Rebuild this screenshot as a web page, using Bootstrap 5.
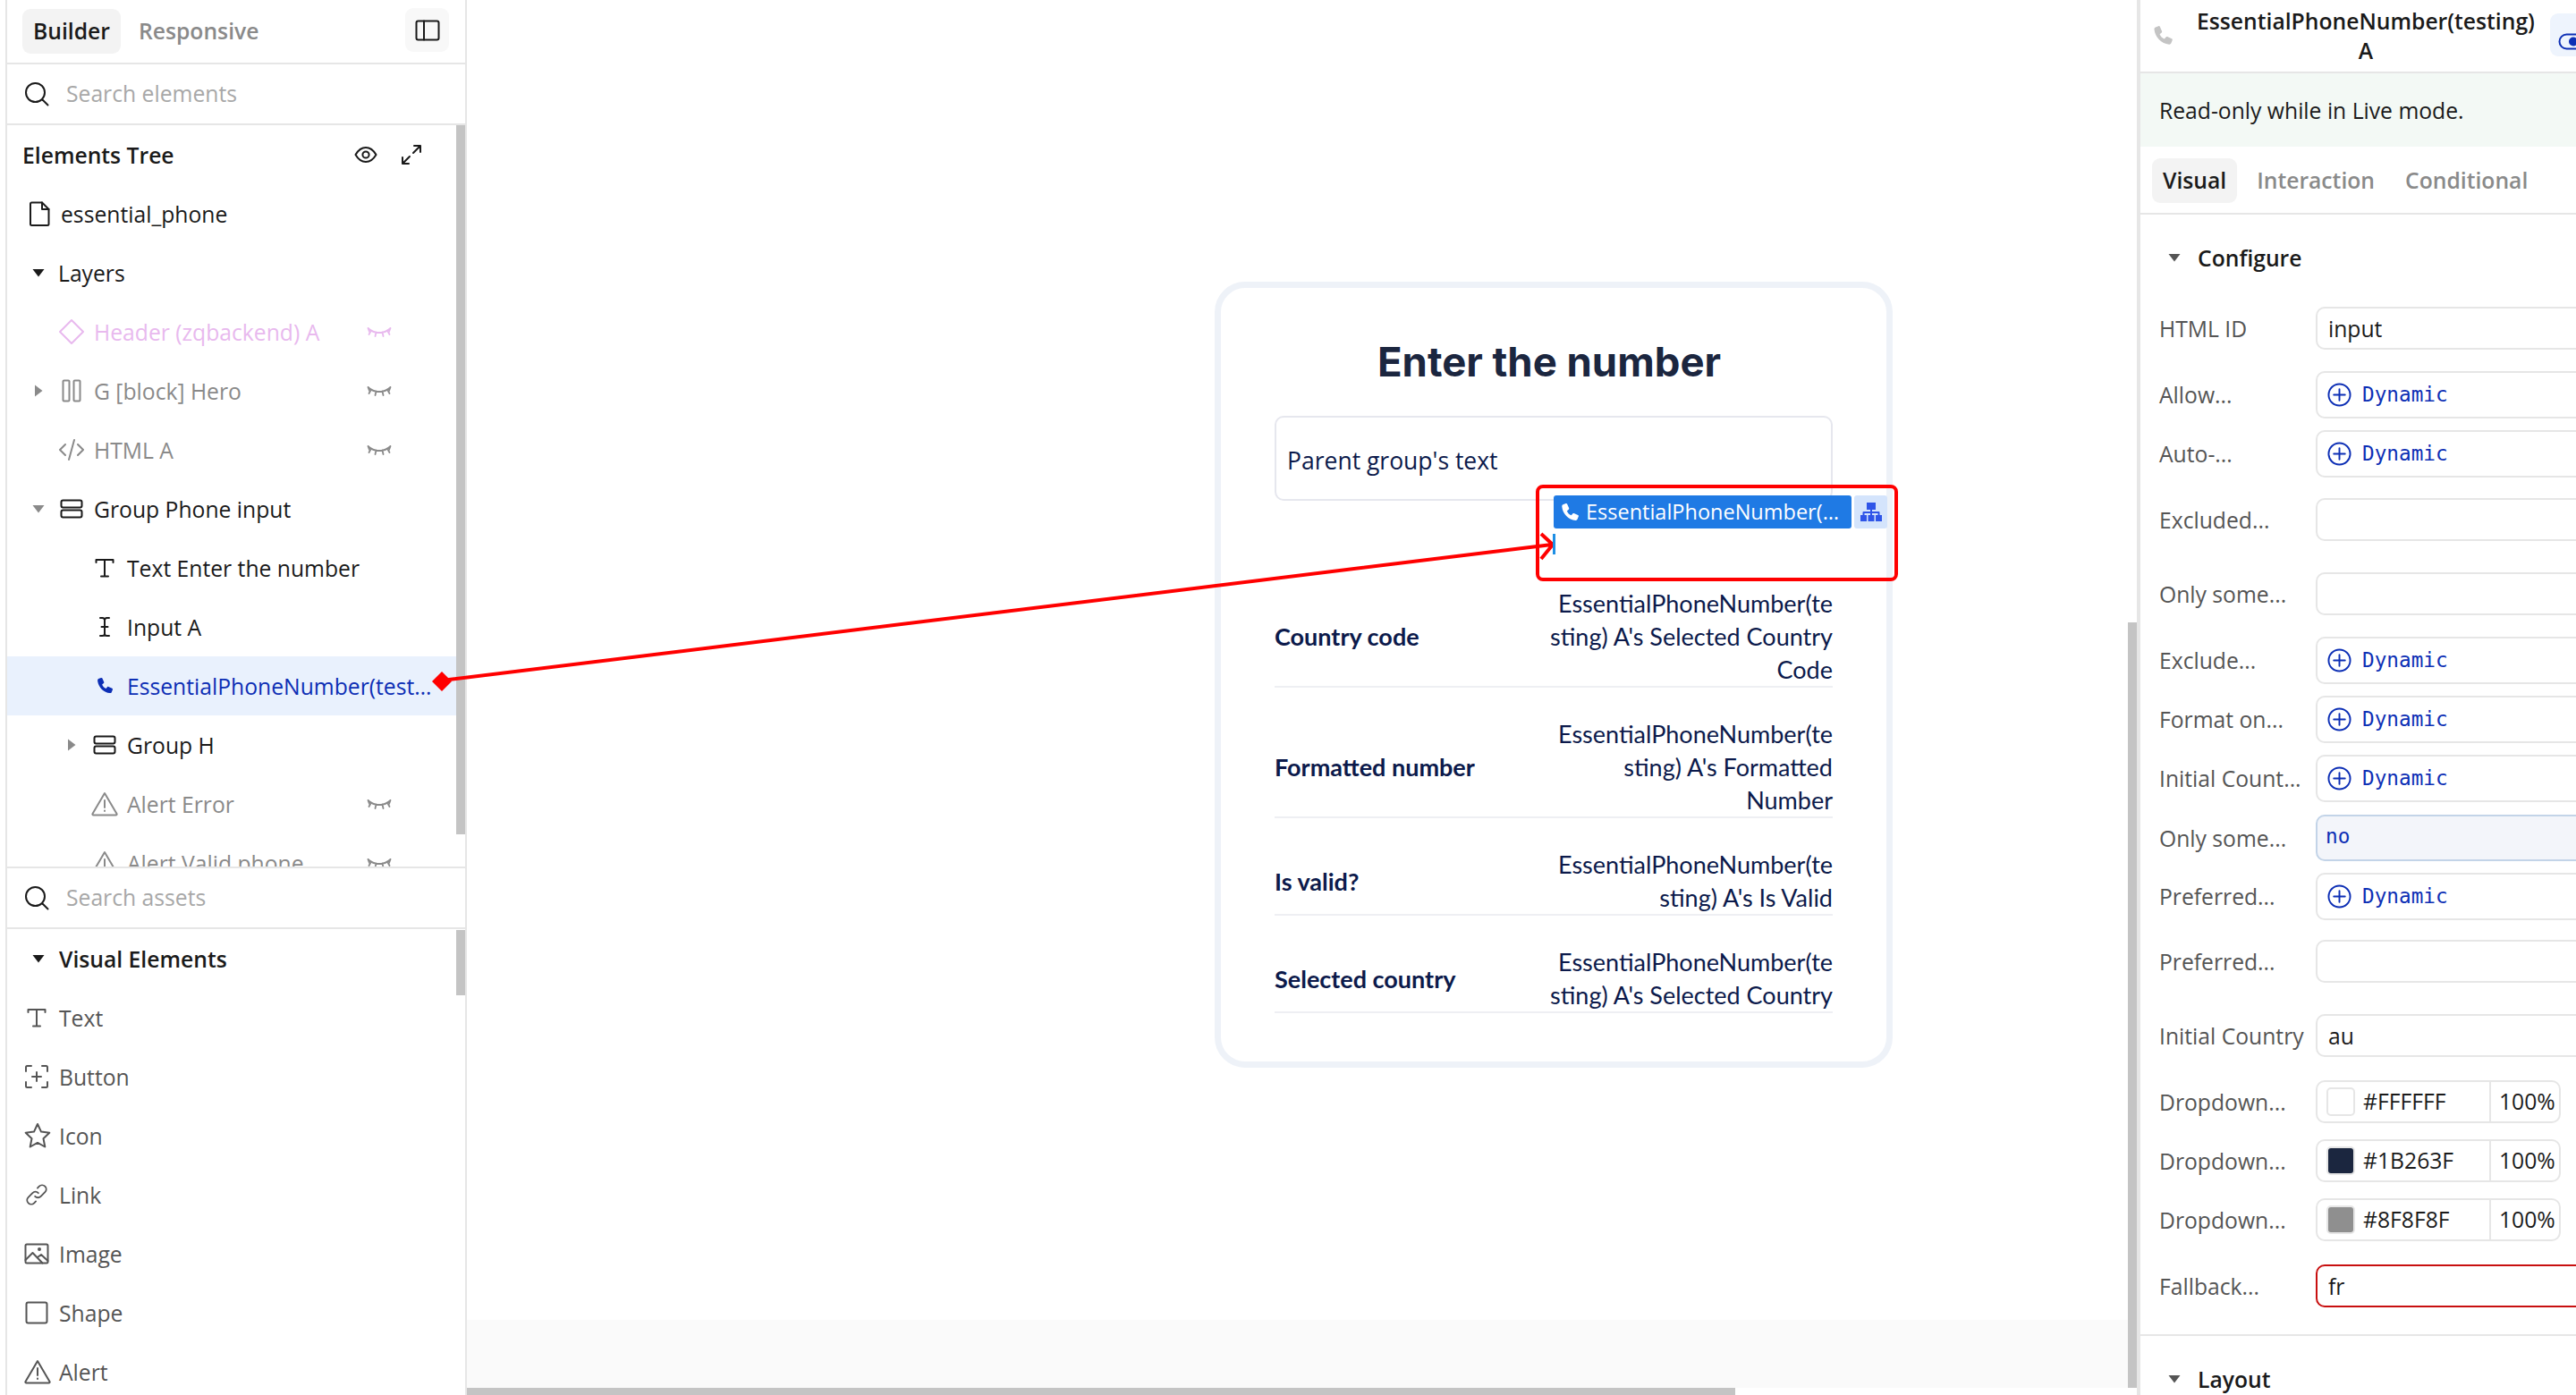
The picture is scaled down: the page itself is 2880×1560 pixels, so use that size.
<!DOCTYPE html>
<html lang="en">
<head>
  <meta charset="UTF-8">
  <meta name="viewport" content="width=device-width, initial-scale=1">
  <title>Builder - essential_phone</title>
  <link href="https://cdn.jsdelivr.net/npm/bootstrap@5.3.5/dist/css/bootstrap.min.css" rel="stylesheet">
  <style>
    body { height: 1560px; overflow: hidden; background: #fff; color: #1a1a1a; font-family: "Open Sans", sans-serif; font-size: 24.7px; line-height: 33px; }
    svg { display: block; flex-shrink: 0; }
    .ico { fill: none; stroke: currentColor; stroke-width: 2; stroke-linecap: round; stroke-linejoin: round; }
    .ico-solid { fill: currentColor; stroke: none; }
    .ico-fino { stroke-width: 1.8; }

    /* left panel */
    .panel-izq { width: 516px; margin-left: 6px; border-left: 2px solid #e6e6e6; border-right: 2px solid #e6e6e6; }
    .barra-tabs { height: 72px; padding: 10px 18px 0 17px; border-bottom: 2px solid #e6e6e6; }
    .nav-link.tab-item { height: 50px; padding: 0 12px; border-radius: 9px; font-weight: 600; line-height: 50px; color: #8a8a8a; background: none; }
    .nav-link.tab-item.active { color: #1a1a1a; background: #f3f3f3; }
    .btn-toggle-panel { width: 49px; height: 49px; margin-top: -1px; padding: 0; background: #f8f8f8; border: 0; border-radius: 9px; color: #1a1a1a; }
    .fila-buscar { height: 68px; padding-left: 19px; border-bottom: 2px solid #e6e6e6; gap: 19px; }
    .fila-buscar input { padding: 0; border: 0; border-radius: 0; font-size: 24.7px; box-shadow: none; }
    .fila-buscar input::placeholder { color: #a8a8a8; }
    .zona-arbol { height: 831px; border-bottom: 2px solid #e6e6e6; overflow: hidden; }
    .zona-assets { height: 520px; overflow: hidden; }
    .fila { height: 66px; margin-right: 10px; }
    .titulo-fila { font-weight: 600; }
    .tit-arbol { padding-left: 17px; }
    .tit-assets { padding-left: 24px; }
    .ico-pagina { margin-right: 12px; }
    .nivel-1 { padding-left: 23px; }
    .nivel-2 { padding-left: 60px; }
    .hueco-caret { width: 24px; margin-right: 10px; color: #8a8a8a; }
    .hueco-caret.negro { color: #1a1a1a; }
    .hueco-caret svg { margin: 0 auto; }
    .hueco-ico { width: 30px; margin-right: 10px; }
    .hueco-ico svg { margin: 0 auto; }
    .oculto { color: #8a8a8a; }
    .oculto-rosa { color: #e8b9ee; }
    .ojo { margin-left: auto; margin-right: 72px; }
    .fila-sel { background: #e9f1fd; color: #0d2fb5; }
    .fila-sel .nombre { max-width: 344px; }
    .activo { padding-left: 19px; color: #555; }
    .activo .hueco-ico { width: 28px; margin-right: 11px; }
    .ico-arbol { margin-left: auto; margin-right: 38px; gap: 26px; }
    .thumb-v { position: absolute; width: 10px; background: #c4c4c4; }
    .thumb-arbol { left: 510px; top: 140px; height: 793px; }
    .thumb-assets { left: 510px; top: 1040px; height: 73px; }

    /* canvas */
    .lienzo { flex: 1 1 0; min-width: 0; }
    .pagina { height: 1476px; padding: 315px 0 0 836px; background: #fff; }
    .banda { height: 76px; margin-right: 10px; background: #fafafa; }
    .tarjeta-form { width: 758px; height: 879px; padding: 0 60px; border: 7px solid #eef2f8; border-radius: 34px; color: #0c1a4b; font-family: Lato, sans-serif; font-size: 27px; line-height: 37px; }
    .titulo-form { margin: 55px 10px 32px 0; color: #1b263f; font-family: Inter, sans-serif; font-size: 45.5px; font-weight: 700; line-height: 56px; text-align: center; }
    .caja-grupo { height: 95px; padding: 30px 12px 0; border: 2px solid #e6e7ee; border-radius: 10px; font-family: "Open Sans", sans-serif; font-size: 26.5px; line-height: 36px; }
    .fila-dato { margin-top: 33px; border-bottom: 2px solid #eeeff3; }
    .fila-dato b { font-weight: 700; }
    .valor-dato { text-align: right; white-space: nowrap; }
    .primera { margin-top: 96px; }
    .scroll-h { position: absolute; left: 522px; top: 1552px; width: 1418px; height: 8px; background: #c4c4c4; }
    .scroll-v { position: absolute; left: 2379px; top: 696px; width: 10px; height: 856px; background: #c4c4c4; }

    /* right panel */
    .panel-der { width: 491px; flex-shrink: 0; border-left: 4px solid #e6e6e6; overflow: hidden; }
    .cabecera { width: 700px; height: 82px; border-bottom: 2px solid #e6e6e6; padding-left: 13px; }
    .cabecera svg.tel { color: #c4c4c4; }
    .titulo-der { width: 396px; margin-left: 17px; font-weight: 600; text-align: center; }
    .btn-modo { width: 80px; height: 48px; margin: -2px 0 0 8px; padding: 15px 0 0 9px; background: #eef4fd; border: 0; border-radius: 9px; color: #0d2fb5; }
    .aviso-live { height: 82px; padding-left: 21px; background: #f3f9f5; }
    .barra-tabs-der { height: 76px; width: 700px; padding: 13px 0 0 13px; border-bottom: 2px solid #e6e6e6; }
    .barra-tabs-der .nav-link.tab-item { margin-right: 10px; }
    .seccion { height: 96px; padding-left: 31px; gap: 19px; font-weight: 600; color: #1a1a1a; }
    .seccion .hueco-caret { width: 14px; margin: 0; color: #555; }
    .campo { width: 700px; padding-left: 21px; }
    .etiqueta { width: 175px; color: #555; white-space: nowrap; }
    .caja { width: 440px; height: 48px; padding: 0 12px; border: 2px solid #e6e6e6; border-radius: 10px; color: #1a1a1a; font-size: 24.7px; line-height: 44px; box-shadow: none; }
    .caja-din { height: 53px; padding: 0 0 0 11px; gap: 12px; color: #0d2fb5; font-family: "DejaVu Sans Mono", monospace; font-size: 22.7px; line-height: 49px; }
    .caja-no { height: 52px; background: #f3f5fa; border-color: #c3d4e8; color: #0d2fb5; font-family: "DejaVu Sans Mono", monospace; font-size: 22.7px; padding-left: 9px; }
    .caja-error { border-color: #c81010; }
    .caja-color { width: 274px; height: 48px; padding: 0; }
    .muestra { width: 32px; height: 32px; margin: 6px 0 0 10px; border: 2px solid #e6e6e6; border-radius: 5px; }
    .m-blanco { background: #fff; }
    .m-navy { background: #1b263f; }
    .m-gris { background: #8f8f8f; }
    .hex { width: 150px; padding-left: 9px; }
    .pct { width: 70px; padding-left: 9px; border-left: 2px solid #e6e6e6; }
    .bajo-7 { margin-bottom: 7px; }
    .sep-13 { margin-bottom: 13px; }
    .sep-14 { margin-bottom: 14px; }
    .sep-18 { margin-bottom: 18px; }
    .sep-22 { margin-bottom: 22px; }
    .sep-23 { margin-bottom: 23px; }
    .sep-24 { margin-bottom: 24px; }
    .sep-26 { margin-bottom: 26px; }
    .sep-30 { margin-bottom: 30px; }
    .sep-35 { margin-bottom: 35px; }
    .linea-layout { width: 700px; border-top: 2px solid #e6e6e6; }

    /* selected element overlay */
    .capa-flechas { position: absolute; left: 0; top: 0; pointer-events: none; }
    .etiqueta-sel { position: absolute; left: 1737px; top: 554px; width: 333px; height: 37px; padding: 0 7px; gap: 7px; background: #1f7ae4; border-radius: 3px; color: #fff; font-size: 23.5px; line-height: 37px; }
    .btn-jerarquia { position: absolute; left: 2073px; top: 554px; width: 37px; height: 37px; padding: 0; background: #d4e4fc; border: 0; border-radius: 3px; color: #2f55e8; }
    .cursor-sel { position: absolute; left: 1736px; top: 597px; width: 3px; height: 23px; background: #1f8fe4; }
  </style>
</head>
<body class="d-flex position-relative">

  <svg width="0" height="0" class="position-absolute">
    <defs>
      <symbol id="i-lupa" viewBox="0 0 28 28"><circle cx="12.5" cy="12.5" r="10.5"/><path d="M20.5 20.5l6 6"/></symbol>
      <symbol id="i-lateral" viewBox="0 0 28 24"><rect x="1.5" y="1.5" width="25" height="21" rx="2"/><path d="M10 1.5v21"/></symbol>
      <symbol id="i-ojo" viewBox="0 0 26 20"><path d="M1.5 10C5 4 9 2 13 2s8 2 11.5 8C21 16 17 18 13 18S5 16 1.5 10z"/><circle cx="13" cy="10" r="3.6"/></symbol>
      <symbol id="i-expandir" viewBox="0 0 24 24"><path d="M14 10l8-8M15 2h7v7M10 14l-8 8M2 15v7h7"/></symbol>
      <symbol id="i-archivo" viewBox="0 0 24 28"><path d="M2 3c0-1 .6-1.5 1.5-1.5H15L22.5 9v16.5c0 1-.6 1.5-1.5 1.5H3.5C2.600 27 2 26.5 2 25.5z"/><path d="M15 1.5V9h7.5"/></symbol>
      <symbol id="i-abajo" viewBox="0 0 14 10"><path d="M.5 1h13L7 9.5z"/></symbol>
      <symbol id="i-derecha" viewBox="0 0 10 14"><path d="M1 .5v13L9.5 7z"/></symbol>
      <symbol id="i-rombo" viewBox="0 0 30 30"><path d="M15 2l13 13-13 13L2 15z"/></symbol>
      <symbol id="i-columnas" viewBox="0 0 22 26"><rect x="1.5" y="1.5" width="7" height="23" rx="1"/><rect x="13.5" y="1.5" width="7" height="23" rx="1"/></symbol>
      <symbol id="i-codigo" viewBox="0 0 30 26"><path d="M8 7l-6 6 6 6M22 7l6 6-6 6M18 2l-6 22"/></symbol>
      <symbol id="i-cerrado" viewBox="0 0 28 14"><path d="M1.5 3c3 3 7 5 12.500 5s9.500-2 12.500-5M1.5 3l1.5 4M26.5 3L25 7M5 5.5L2.5 10M23 5.5l2.500 4.5M10.5 7.5l-1 4.5M17.5 7.5l1 4.5"/></symbol>
      <symbol id="i-grupo" viewBox="0 0 26 22"><rect x="1.5" y="1.5" width="23" height="8" rx="2"/><rect x="1.5" y="12.5" width="23" height="8" rx="2"/></symbol>
      <symbol id="i-texto" viewBox="0 0 22 22"><path d="M1.5 5V2h19v3M11 2v18M7 20.5h8"/></symbol>
      <symbol id="i-cursor" viewBox="0 0 16 24"><path d="M3 2h2.500C7 2 8 3 8 4.5v15C8 21 7 22 5.5 22H3M13 2h-2.500C9 2 8 3 8 4.5M13 22h-2.500C9 22 8 21 8 19.500M4.500 12h7"/></symbol>
      <symbol id="i-tel" viewBox="0 0 24 24"><path class="ico-solid" d="M3.800 2.500l3.400-1.300c.8-.3 1.400 0 1.700.7l2.200 5c.2.600.1 1.100-.4 1.500L8.600 10.300c1 2.500 2.700 4.200 5.200 5.300l1.800-2.100c.4-.5 1-.6 1.500-.4l4.900 2.200c.7.300 1 1 .7 1.700l-1.300 3.300c-.4 1-1.300 1.500-2.300 1.400C10.500 21 3.300 13.600 2.500 4.800c-.1-1 .4-1.900 1.300-2.300z"/></symbol>
      <symbol id="i-alerta" viewBox="0 0 30 28"><path d="M15 2L28.500 25c.4.800 0 1.5-1 1.5h-25c-1 0-1.400-.7-1-1.5z"/><path d="M15 10v8M15 21.5v.5"/></symbol>
      <symbol id="i-boton" viewBox="0 0 28 28"><path d="M2 8V3.500C2 2.500 2.500 2 3.500 2H8M20 2h4.500c1 0 1.500.5 1.500 1.500V8M26 20v4.500c0 1-.5 1.500-1.500 1.500H20M8 26H3.500C2.500 26 2 25.500 2 24.500V20M14 9v10M9 14h10"/></symbol>
      <symbol id="i-estrella" viewBox="0 0 30 30"><path d="M15 2l4 8.600 9.300 1.200-6.800 6.400 1.800 9.300L15 22.900l-8.300 4.600 1.800-9.300-6.800-6.400L11 10.600z"/></symbol>
      <symbol id="i-enlace" viewBox="0 0 28 28"><path d="M12 16c2 2 5 2 7 0l5-5c2-2 2-5 0-7s-5-2-7 0l-2 2"/><path d="M16 12c-2-2-5-2-7 0l-5 5c-2 2-2 5 0 7s5 2 7 0l2-2"/></symbol>
      <symbol id="i-imagen" viewBox="0 0 28 24"><rect x="1.5" y="1.5" width="25" height="21" rx="1.5"/><path d="M1.5 19l8-8 11 11.500M15 16l4-3 7.500 7"/><circle cx="17" cy="7" r="1"/></symbol>
      <symbol id="i-forma" viewBox="0 0 26 26"><rect x="1.5" y="1.5" width="23" height="23" rx="2"/></symbol>
      <symbol id="i-mas" viewBox="0 0 28 28"><circle cx="14" cy="14" r="12.5"/><path d="M14 7.500v13M7.500 14h13"/></symbol>
      <symbol id="i-jerarquia" viewBox="0 0 24 22"><rect x="7" y="0" width="10" height="8"/><rect x="0" y="14" width="7" height="7"/><rect x="8.5" y="14" width="7" height="7"/><rect x="17" y="14" width="7" height="7"/><path class="ico" stroke-width="1.5" d="M3.500 14v-3h17v3M12 8v6"/></symbol>
    </defs>
  </svg>

  <!-- left panel -->
  <aside class="panel-izq flex-shrink-0">
    <div class="barra-tabs d-flex justify-content-between">
      <ul class="nav gap-2">
        <li class="nav-item"><a class="nav-link tab-item active" href="#">Builder</a></li>
        <li class="nav-item"><a class="nav-link tab-item" href="#">Responsive</a></li>
      </ul>
      <button class="btn-toggle-panel d-flex align-items-center justify-content-center">
        <svg class="ico" width="28" height="24"><use href="#i-lateral"/></svg>
      </button>
    </div>
    <div class="fila-buscar d-flex align-items-center">
      <svg class="ico" width="28" height="28"><use href="#i-lupa"/></svg>
      <input type="text" class="form-control" placeholder="Search elements">
    </div>

    <div class="zona-arbol">
      <div class="fila tit-arbol d-flex align-items-center titulo-fila">
        Elements Tree
        <div class="ico-arbol d-flex align-items-center">
          <svg class="ico" width="26" height="20"><use href="#i-ojo"/></svg>
          <svg class="ico" width="24" height="24"><use href="#i-expandir"/></svg>
        </div>
      </div>
      <div class="fila tit-assets d-flex align-items-center">
        <svg class="ico ico-pagina" width="24" height="28"><use href="#i-archivo"/></svg>
        essential_phone
      </div>
      <div class="fila nivel-1 d-flex align-items-center">
        <div class="hueco-caret negro"><svg class="ico-solid" width="14" height="10"><use href="#i-abajo"/></svg></div>
        Layers
      </div>
      <div class="fila nivel-1 d-flex align-items-center oculto-rosa">
        <div class="hueco-caret"></div>
        <div class="hueco-ico"><svg class="ico" width="30" height="30"><use href="#i-rombo"/></svg></div>
        Header (zqbackend) A
        <svg class="ico ico-fino ojo" width="28" height="14"><use href="#i-cerrado"/></svg>
      </div>
      <div class="fila nivel-1 d-flex align-items-center oculto">
        <div class="hueco-caret"><svg class="ico-solid" width="10" height="14"><use href="#i-derecha"/></svg></div>
        <div class="hueco-ico"><svg class="ico" width="22" height="26"><use href="#i-columnas"/></svg></div>
        G [block] Hero
        <svg class="ico ico-fino ojo" width="28" height="14"><use href="#i-cerrado"/></svg>
      </div>
      <div class="fila nivel-1 d-flex align-items-center oculto">
        <div class="hueco-caret"></div>
        <div class="hueco-ico"><svg class="ico" width="30" height="26"><use href="#i-codigo"/></svg></div>
        HTML A
        <svg class="ico ico-fino ojo" width="28" height="14"><use href="#i-cerrado"/></svg>
      </div>
      <div class="fila nivel-1 d-flex align-items-center">
        <div class="hueco-caret"><svg class="ico-solid oculto" width="14" height="10"><use href="#i-abajo"/></svg></div>
        <div class="hueco-ico"><svg class="ico" width="26" height="22"><use href="#i-grupo"/></svg></div>
        Group Phone input
      </div>
      <div class="fila nivel-2 d-flex align-items-center">
        <div class="hueco-caret"></div>
        <div class="hueco-ico"><svg class="ico" width="22" height="22"><use href="#i-texto"/></svg></div>
        Text Enter the number
      </div>
      <div class="fila nivel-2 d-flex align-items-center">
        <div class="hueco-caret"></div>
        <div class="hueco-ico"><svg class="ico" width="16" height="24"><use href="#i-cursor"/></svg></div>
        Input A
      </div>
      <div class="fila fila-sel nivel-2 d-flex align-items-center">
        <div class="hueco-caret"></div>
        <div class="hueco-ico"><svg width="20" height="20"><use href="#i-tel"/></svg></div>
        <span class="nombre text-truncate">EssentialPhoneNumber(testing) A</span>
      </div>
      <div class="fila nivel-2 d-flex align-items-center">
        <div class="hueco-caret"><svg class="ico-solid oculto" width="10" height="14"><use href="#i-derecha"/></svg></div>
        <div class="hueco-ico"><svg class="ico" width="26" height="22"><use href="#i-grupo"/></svg></div>
        Group H
      </div>
      <div class="fila nivel-2 d-flex align-items-center oculto">
        <div class="hueco-caret"></div>
        <div class="hueco-ico"><svg class="ico" width="30" height="28"><use href="#i-alerta"/></svg></div>
        Alert Error
        <svg class="ico ico-fino ojo" width="28" height="14"><use href="#i-cerrado"/></svg>
      </div>
      <div class="fila nivel-2 d-flex align-items-center oculto">
        <div class="hueco-caret"></div>
        <div class="hueco-ico"><svg class="ico" width="30" height="28"><use href="#i-alerta"/></svg></div>
        Alert Valid phone
        <svg class="ico ico-fino ojo" width="28" height="14"><use href="#i-cerrado"/></svg>
      </div>
    </div>

    <div class="fila-buscar d-flex align-items-center">
      <svg class="ico" width="28" height="28"><use href="#i-lupa"/></svg>
      <input type="text" class="form-control" placeholder="Search assets">
    </div>

    <div class="zona-assets">
      <div class="fila tit-assets d-flex align-items-center titulo-fila">
        <div class="me-3 ps-1"><svg class="ico-solid" width="14" height="10"><use href="#i-abajo"/></svg></div>
        Visual Elements
      </div>
      <div class="fila activo d-flex align-items-center"><div class="hueco-ico"><svg class="ico mx-auto" width="22" height="22"><use href="#i-texto"/></svg></div>Text</div>
      <div class="fila activo d-flex align-items-center"><div class="hueco-ico"><svg class="ico" width="28" height="28"><use href="#i-boton"/></svg></div>Button</div>
      <div class="fila activo d-flex align-items-center"><div class="hueco-ico"><svg class="ico" width="30" height="30"><use href="#i-estrella"/></svg></div>Icon</div>
      <div class="fila activo d-flex align-items-center"><div class="hueco-ico"><svg class="ico" width="26" height="26"><use href="#i-enlace"/></svg></div>Link</div>
      <div class="fila activo d-flex align-items-center"><div class="hueco-ico"><svg class="ico" width="28" height="24"><use href="#i-imagen"/></svg></div>Image</div>
      <div class="fila activo d-flex align-items-center"><div class="hueco-ico"><svg class="ico" width="26" height="26"><use href="#i-forma"/></svg></div>Shape</div>
      <div class="fila activo d-flex align-items-center"><div class="hueco-ico"><svg class="ico" width="30" height="28"><use href="#i-alerta"/></svg></div>Alert</div>
    </div>
  </aside>

  <!-- canvas -->
  <main class="lienzo">
    <div class="pagina">
      <div class="tarjeta-form">
        <h1 class="titulo-form">Enter the number</h1>
        <div class="caja-grupo">Parent group's text</div>
        <div class="fila-dato primera d-flex align-items-center justify-content-between">
          <b>Country code</b>
          <div class="valor-dato">EssentialPhoneNumber(te<br>sting) A's Selected Country<br>Code</div>
        </div>
        <div class="fila-dato d-flex align-items-center justify-content-between">
          <b>Formatted number</b>
          <div class="valor-dato">EssentialPhoneNumber(te<br>sting) A's Formatted<br>Number</div>
        </div>
        <div class="fila-dato d-flex align-items-center justify-content-between">
          <b>Is valid?</b>
          <div class="valor-dato">EssentialPhoneNumber(te<br>sting) A's Is Valid</div>
        </div>
        <div class="fila-dato d-flex align-items-center justify-content-between">
          <b>Selected country</b>
          <div class="valor-dato">EssentialPhoneNumber(te<br>sting) A's Selected Country</div>
        </div>
      </div>
    </div>
    <div class="banda"></div>
  </main>
  <div class="thumb-v thumb-arbol"></div>
  <div class="thumb-v thumb-assets"></div>
  <div class="scroll-h"></div>
  <div class="scroll-v"></div>

  <!-- right panel -->
  <aside class="panel-der">
    <div class="cabecera d-flex align-items-center">
      <svg class="tel" width="24" height="24"><use href="#i-tel"/></svg>
      <div class="titulo-der">EssentialPhoneNumber(testing) A</div>
      <button class="btn-modo">
        <svg class="ico" width="60" height="19" stroke-width="2.5"><rect x="1.5" y="1.5" width="50" height="16" rx="8"/><circle cx="17" cy="9.5" r="5" class="ico-solid"/></svg>
      </button>
    </div>
    <div class="aviso-live d-flex align-items-center">Read-only while in Live mode.</div>
    <div class="barra-tabs-der">
      <ul class="nav">
        <li class="nav-item"><a class="nav-link tab-item active" href="#">Visual</a></li>
        <li class="nav-item"><a class="nav-link tab-item" href="#">Interaction</a></li>
        <li class="nav-item"><a class="nav-link tab-item" href="#">Conditional</a></li>
      </ul>
    </div>
    <div class="seccion bajo-7 d-flex align-items-center">
      <div class="hueco-caret"><svg class="ico-solid" width="14" height="10"><use href="#i-abajo"/></svg></div>
      Configure
    </div>

    <div class="campo d-flex align-items-center sep-24">
      <div class="etiqueta">HTML ID</div>
      <input class="form-control caja" value="input">
    </div>
    <div class="campo d-flex align-items-center sep-13">
      <div class="etiqueta">Allow...</div>
      <div class="caja caja-din d-flex align-items-center"><svg class="ico" width="27" height="27"><use href="#i-mas"/></svg>Dynamic</div>
    </div>
    <div class="campo d-flex align-items-center sep-23">
      <div class="etiqueta">Auto-...</div>
      <div class="caja caja-din d-flex align-items-center"><svg class="ico" width="27" height="27"><use href="#i-mas"/></svg>Dynamic</div>
    </div>
    <div class="campo d-flex align-items-center sep-35">
      <div class="etiqueta">Excluded...</div>
      <input class="form-control caja">
    </div>
    <div class="campo d-flex align-items-center sep-24">
      <div class="etiqueta">Only some...</div>
      <input class="form-control caja">
    </div>
    <div class="campo d-flex align-items-center sep-13">
      <div class="etiqueta">Exclude...</div>
      <div class="caja caja-din d-flex align-items-center"><svg class="ico" width="27" height="27"><use href="#i-mas"/></svg>Dynamic</div>
    </div>
    <div class="campo d-flex align-items-center sep-13">
      <div class="etiqueta">Format on...</div>
      <div class="caja caja-din d-flex align-items-center"><svg class="ico" width="27" height="27"><use href="#i-mas"/></svg>Dynamic</div>
    </div>
    <div class="campo d-flex align-items-center sep-14">
      <div class="etiqueta">Initial Count...</div>
      <div class="caja caja-din d-flex align-items-center"><svg class="ico" width="27" height="27"><use href="#i-mas"/></svg>Dynamic</div>
    </div>
    <div class="campo d-flex align-items-center sep-13">
      <div class="etiqueta">Only some...</div>
      <div class="caja caja-no">no</div>
    </div>
    <div class="campo d-flex align-items-center sep-22">
      <div class="etiqueta">Preferred...</div>
      <div class="caja caja-din d-flex align-items-center"><svg class="ico" width="27" height="27"><use href="#i-mas"/></svg>Dynamic</div>
    </div>
    <div class="campo d-flex align-items-center sep-35">
      <div class="etiqueta">Preferred...</div>
      <input class="form-control caja">
    </div>
    <div class="campo d-flex align-items-center sep-26">
      <div class="etiqueta">Initial Country</div>
      <input class="form-control caja" value="au">
    </div>
    <div class="campo d-flex align-items-center sep-18">
      <div class="etiqueta">Dropdown...</div>
      <div class="caja caja-color d-flex"><div class="muestra m-blanco"></div><div class="hex">#FFFFFF</div><div class="pct">100%</div></div>
    </div>
    <div class="campo d-flex align-items-center sep-18">
      <div class="etiqueta">Dropdown...</div>
      <div class="caja caja-color d-flex"><div class="muestra m-navy"></div><div class="hex">#1B263F</div><div class="pct">100%</div></div>
    </div>
    <div class="campo d-flex align-items-center sep-26">
      <div class="etiqueta">Dropdown...</div>
      <div class="caja caja-color d-flex"><div class="muestra m-gris"></div><div class="hex">#8F8F8F</div><div class="pct">100%</div></div>
    </div>
    <div class="campo d-flex align-items-center sep-30">
      <div class="etiqueta">Fallback...</div>
      <input class="form-control caja caja-error" value="fr">
    </div>
    <div class="linea-layout"></div>
    <div class="seccion d-flex align-items-center">
      <div class="hueco-caret"><svg class="ico-solid" width="14" height="10"><use href="#i-abajo"/></svg></div>
      Layout
    </div>
  </aside>

  <!-- selected element marker, lies over the canvas -->
  <svg class="capa-flechas" width="2880" height="1560">
    <rect x="1719" y="544" width="401" height="104" rx="6" fill="none" stroke="#ff0000" stroke-width="4"/>
    <path d="M494 761L1735 609M1723 597l13 12-13 16" fill="none" stroke="#ff0000" stroke-width="4"/>
    <path d="M494 751l11 11-11 11-11-11z" fill="#ff0000"/>
  </svg>
  <div class="etiqueta-sel d-flex align-items-center">
    <svg width="22" height="22"><use href="#i-tel"/></svg>
    <span class="text-truncate">EssentialPhoneNumber(testing) A</span>
  </div>
  <button class="btn-jerarquia d-flex align-items-center justify-content-center">
    <svg class="ico-solid" width="24" height="22"><use href="#i-jerarquia"/></svg>
  </button>
  <div class="cursor-sel"></div>

  <script src="https://cdn.jsdelivr.net/npm/bootstrap@5.3.5/dist/js/bootstrap.bundle.min.js"></script>
</body>
</html>
